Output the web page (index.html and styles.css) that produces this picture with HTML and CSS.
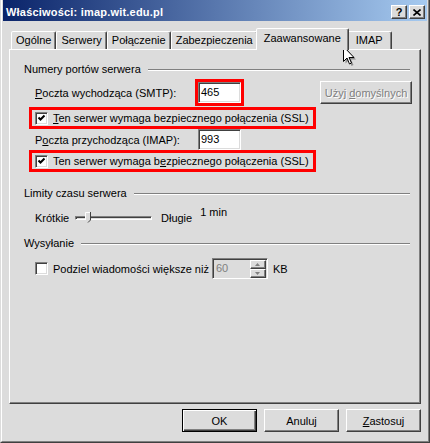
FILE: index.html
```html
<!DOCTYPE html>
<html lang="pl">
<head>
  <meta charset="UTF-8" />
  <title>Właściwości: imap.wit.edu.pl</title>
  <link rel="stylesheet" href="styles.css">
</head>
<body>
  <div class="window">
    <div class="frame">
      <!-- Title bar -->
      <div class="titlebar">
        <span class="title">Właściwości: imap.wit.edu.pl</span>
        <div class="caption-buttons">
          <span class="cap-btn help">?</span>
          <span class="cap-btn close">
            <svg width="8" height="7" viewBox="0 0 8 7"><path d="M0.5 0.5 L7.5 6.5 M7.5 0.5 L0.5 6.5" stroke="#000" stroke-width="1.6" /></svg>
          </span>
        </div>
      </div>

      <div class="dialog-body">
        <!-- Tabs -->
        <div class="tabs">
          <div class="tab">Ogólne</div>
          <div class="tab">Serwery</div>
          <div class="tab">Połączenie</div>
          <div class="tab">Zabezpieczenia</div>
          <div class="tab active">Zaawansowane</div>
          <div class="tab tab-imap">IMAP</div>
        </div>

        <div class="panel">
          <div class="group group-ports">
            <span>Numery portów serwera</span>
            <span class="etch"></span>
          </div>

          <div class="row row-smtp">
            <span class="field-label"><u>P</u>oczta wychodząca (SMTP):</span>
            <span class="field flag">465</span>
            <span class="btn btn-wide disabled">Użyj&nbsp;<u>d</u>omyślnych</span>
          </div>

          <div class="check-row flag first-ssl">
            <span class="check">
              <svg width="9" height="9" viewBox="0 0 9 9"><path d="M1.5 3.5 L3.5 5.5 L7.5 1.5" fill="none" stroke="#000" stroke-width="2" /></svg>
            </span>
            <span><u>T</u>en serwer wymaga bezpiecznego połączenia (SSL)</span>
          </div>

          <div class="row row-imap">
            <span class="field-label">P<u>o</u>czta przychodząca (IMAP):</span>
            <span class="field">993</span>
          </div>

          <div class="check-row flag second-ssl">
            <span class="check">
              <svg width="9" height="9" viewBox="0 0 9 9"><path d="M1.5 3.5 L3.5 5.5 L7.5 1.5" fill="none" stroke="#000" stroke-width="2" /></svg>
            </span>
            <span>Ten serwer wymaga b<u>e</u>zpiecznego połączenia (SSL)</span>
          </div>

          <div class="group group-timeout">
            <span>Limity czasu serwera</span>
            <span class="etch"></span>
          </div>

          <div class="row row-slider">
            <span class="slider-label">Krótkie</span>
            <div class="slider">
              <span class="track"></span>
              <svg class="thumb" width="6" height="11" viewBox="0 0 6 11">
                <path d="M0 0 H6 V8 L3 11 L0 8 Z" fill="#dcdcdc" />
                <path d="M0.5 8 V0.5 H5" fill="none" stroke="#fff" />
                <path d="M5.5 0 V8 L3 10.5" fill="none" stroke="#404040" />
              </svg>
            </div>
            <span class="slider-end">Długie</span>
            <span class="slider-value">1 min</span>
          </div>

          <div class="group group-send">
            <span>Wysyłanie</span>
            <span class="etch"></span>
          </div>

          <div class="row row-split">
            <span class="check"></span>
            <span class="split-label">Podziel wiadomości większe niż</span>
            <div class="spin-field">
              <span class="spin-text">60</span>
              <div class="spin-buttons">
                <span class="spin-btn"><svg width="5" height="3" viewBox="0 0 5 3"><path d="M2.5 0 L5 3 H0 Z" fill="#808080" /></svg></span>
                <span class="spin-btn"><svg width="5" height="3" viewBox="0 0 5 3"><path d="M0 0 H5 L2.5 3 Z" fill="#808080" /></svg></span>
              </div>
            </div>
            <span class="unit">KB</span>
          </div>
        </div>

        <!-- Dialog buttons -->
        <div class="actions">
          <span class="btn default">OK</span>
          <span class="btn">Anuluj</span>
          <span class="btn"><u>Z</u>astosuj</span>
        </div>
      </div>
    </div>

    <svg class="cursor" width="13" height="20" viewBox="0 0 13 20">
      <path d="M1.5 1.5 V16.5 L5 13 L7.5 19 L9.5 18 L7 12.5 H12 Z" fill="#000" opacity="0.35" transform="translate(1 1)" />
      <path d="M0.5 0.5 V15.5 L4 12 L6.5 18 L8.5 17 L6 11.5 H11 Z" fill="#fff" stroke="#000" />
    </svg>
  </div>
</body>
</html>
```

FILE: styles.css
```css
body {
  margin: 0;
  background-color: #dcdcdc;
  font-family: "Liberation Sans", Arial, sans-serif;
  font-size: 11px;
  color: #000;
}

u {
  text-decoration: underline;
  text-underline-offset: 1px;
}

.window {
  position: relative;
  width: 430px;
  height: 443px;
  box-sizing: border-box;
  border: 1px solid;
  border-top: none;
  border-color: #dcdcdc #404040 #404040 #dcdcdc;
}

.frame {
  height: 100%;
  box-sizing: border-box;
  border: 1px solid;
  border-top: none;
  border-color: #fff #808080 #808080 #fff;
  padding: 0 1px 1px 1px;
  display: flex;
  flex-direction: column;
}

.titlebar {
  height: 21px;
  box-sizing: border-box;
  padding: 3px 2px 0 3px;
  display: flex;
  align-items: center;
  justify-content: space-between;
  background: linear-gradient(to right, #0a246a, #a6caf0);
}

.title {
  color: #fff;
  font-weight: bold;
  font-size: 11px;
  letter-spacing: 0.2px;
}

.caption-buttons {
  display: flex;
  gap: 2px;
}

.cap-btn {
  width: 16px;
  height: 14px;
  box-sizing: border-box;
  background-color: #dcdcdc;
  border: 1px solid;
  border-color: #fff #404040 #404040 #fff;
  box-shadow: inset -1px -1px #808080;
  display: flex;
  align-items: center;
  justify-content: center;
  font-weight: bold;
  font-size: 11px;
  line-height: 12px;
}

.dialog-body {
  flex: 1;
  padding: 7px 6px 0 6px;
  display: flex;
  flex-direction: column;
}

/* Tabs */
.tabs {
  display: flex;
  align-items: flex-end;
  height: 21px;
  padding-left: 2px;
  position: relative;
  z-index: 1;
}

.tab {
  height: 18px;
  box-sizing: border-box;
  padding: 0 4px;
  border: 1px solid;
  border-bottom: none;
  border-color: #fff #404040 transparent #fff;
  border-radius: 2px 2px 0 0;
  box-shadow: inset -1px 0 #808080;
  background-color: #dcdcdc;
  line-height: 16px;
  white-space: nowrap;
}

.tab.active {
  position: relative;
  height: 22px;
  margin: 0 -2px -1px;
  padding: 0 7px;
  line-height: 18px;
}

.tab-imap {
  padding: 0 8px;
}

.panel {
  height: 355px;
  box-sizing: border-box;
  border: 1px solid;
  border-color: #fff #404040 #404040 #fff;
  box-shadow: inset -1px -1px #808080;
  display: flex;
  flex-direction: column;
}

.group {
  display: flex;
  align-items: center;
  gap: 7px;
  margin: 0 10px 0 14px;
  line-height: 13px;
}

.group .etch {
  flex: 1;
  border-top: 1px solid #808080;
  border-bottom: 1px solid #fff;
}

.group-ports { margin-top: 13px; }
.group-timeout { margin-top: 18px; }
.group-send { margin-top: 11px; }

.row {
  display: flex;
  align-items: center;
  padding: 0 8px 0 25px;
}

.row-smtp { margin-top: 6px; height: 21px; }
.row-imap { margin-top: 3px; height: 21px; }
.row-slider { margin-top: 10px; height: 16px; }
.row-split { margin-top: 8px; height: 21px; }

.field-label {
  width: 163px;
}

.field {
  width: 43px;
  height: 21px;
  box-sizing: border-box;
  padding: 0 2px;
  background-color: #fff;
  border: 1px solid;
  border-color: #808080 #fff #fff #808080;
  box-shadow: inset 1px 1px #404040, inset -1px -1px #dcdcdc;
  line-height: 19px;
}

.flag {
  outline: 3px solid #f00;
}

.btn {
  width: 75px;
  height: 23px;
  box-sizing: border-box;
  display: flex;
  align-items: center;
  justify-content: center;
  background-color: #dcdcdc;
  border: 1px solid;
  border-color: #fff #404040 #404040 #fff;
  box-shadow: inset -1px -1px #808080;
}

.btn.default {
  border-color: #000;
  box-shadow: inset 1px 1px #fff, inset -1px -1px #404040, inset -2px -2px #808080;
}

.btn-wide {
  width: 92px;
  margin-left: auto;
}

.btn.disabled {
  color: #808080;
  text-shadow: 1px 1px #fff;
}

.check-row {
  align-self: flex-start;
  display: flex;
  align-items: center;
  gap: 5px;
  height: 16px;
  margin-left: 22px;
  padding: 0 4px 0 3px;
}

.first-ssl { margin-top: 7px; }
.second-ssl { margin-top: 3px; }

.check {
  width: 13px;
  height: 13px;
  box-sizing: border-box;
  flex: none;
  background-color: #fff;
  border: 1px solid;
  border-color: #808080 #fff #fff #808080;
  box-shadow: inset 1px 1px #404040, inset -1px -1px #dcdcdc;
  display: flex;
  align-items: center;
  justify-content: center;
}

/* Slider */
.slider-label {
  width: 37px;
}

.slider {
  position: relative;
  width: 83px;
  height: 16px;
  display: flex;
  align-items: center;
}

.track {
  flex: 1;
  margin: 0 3px;
  height: 4px;
  box-sizing: border-box;
  border: 1px solid;
  border-color: #808080 #fff #fff #808080;
  box-shadow: inset 1px 1px #404040;
}

.slider .thumb {
  position: absolute;
  left: 13px;
  top: 2px;
}

.slider-end {
  margin-left: 6px;
}

.slider-value {
  margin-left: 8px;
  margin-bottom: 12px;
}

/* Split messages */
.split-label {
  margin-left: 5px;
}

.spin-field {
  margin-left: 3px;
  width: 56px;
  height: 21px;
  box-sizing: border-box;
  border: 1px solid;
  border-color: #808080 #fff #fff #808080;
  box-shadow: inset 1px 1px #404040;
  display: flex;
}

.spin-text {
  flex: 1;
  padding: 1px 0 0 3px;
  color: #808080;
  line-height: 17px;
}

.spin-buttons {
  width: 16px;
  padding: 1px 1px 0 0;
  display: flex;
  flex-direction: column;
}

.spin-btn {
  flex: 1;
  box-sizing: border-box;
  border: 1px solid;
  border-color: #fff #404040 #404040 #fff;
  box-shadow: inset -1px -1px #808080;
  display: flex;
  align-items: center;
  justify-content: center;
}

.unit {
  margin-left: 5px;
}

/* Dialog buttons */
.actions {
  margin-top: 5px;
  display: flex;
  justify-content: flex-end;
  gap: 7px;
}

.cursor {
  position: absolute;
  left: 342px;
  top: 46px;
}
```
